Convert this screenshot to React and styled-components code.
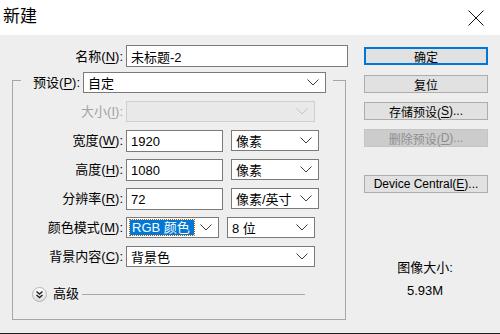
import React from 'react'
import styled, { createGlobalStyle } from 'styled-components'

const GlobalStyle = createGlobalStyle`
  body {
    margin: 0;
    font-family: "Liberation Sans", "Noto Sans CJK SC", sans-serif;
    font-size: 13px;
    color: #000;
  }
  * { box-sizing: border-box; }
`

const Window = styled.div`
  width: 500px;
  height: 334px;
  display: flex;
  flex-direction: column;
  background: #fff;
`

const TitleBar = styled.div`
  height: 35px;
  display: flex;
  align-items: center;
  justify-content: space-between;
  padding: 0 16px 0 3px;
  background: #fff;
`

const Title = styled.div`
  font-size: 17px;
  line-height: 20px;
  margin-top: -1px;
`

const Body = styled.div`
  flex: 1;
  display: flex;
  background: #eeeeee;
  border-bottom: 1px solid #1e1e1e;
`

const LeftCol = styled.div`
  width: 348px;
  padding: 10px 0 0 12px;
`

const NameRow = styled.div`
  display: flex;
  align-items: center;
  gap: 3px;
  height: 22px;
`

const Label = styled.div`
  width: ${p => p.$w || 110}px;
  text-align: right;
  white-space: nowrap;
  line-height: 21px;
  color: ${p => (p.$disabled ? '#a3a3a3' : '#000')};
`

const Key = styled.span`
  text-decoration: underline;
  text-underline-offset: 2px;
`

const Field = styled.div`
  width: ${p => p.$w}px;
  height: ${p => p.$h || 21}px;
  display: flex;
  align-items: center;
  justify-content: space-between;
  padding: 0 6px 0 4px;
  background: ${p => (p.$disabled ? '#e9e9e9' : '#fff')};
  border: 1px solid ${p => (p.$disabled ? '#cfcfcf' : '#7a7a7a')};
  white-space: nowrap;
`

const Group = styled.div`
  margin-top: 13px;
  width: 334px;
  height: 240px;
  border: 1px solid #a6a6a6;
`

const Legend = styled.div`
  display: flex;
  align-items: center;
  gap: 3px;
  width: fit-content;
  margin: -9px 0 0 8px;
  padding: 0 7px 0 10px;
  background: #eeeeee;
`

const Rows = styled.div`
  display: grid;
  grid-template-columns: 110px auto;
  grid-auto-rows: 21px;
  row-gap: 8px;
  column-gap: 3px;
  margin-top: 8px;
  justify-items: start;
`

const Pair = styled.div`
  display: flex;
  gap: 8px;
`

const Highlight = styled.span`
  background: #0078d7;
  color: #fff;
  padding: 0 4px 0 2px;
  line-height: 16px;
  outline: 1px dotted #b35c00;
  margin-left: -1px;
`

const Advanced = styled.div`
  display: flex;
  align-items: center;
  height: 18px;
  margin: 18px 40px 0 19px;
`

const AdvText = styled.span`
  margin: 0 3px 0 6px;
  line-height: 18px;
`

const Rule = styled.div`
  flex: 1;
  height: 1px;
  background: #a9a9a9;
`

const RightCol = styled.div`
  width: 124px;
  margin-left: 16px;
  padding-top: 12px;
  display: flex;
  flex-direction: column;
  align-items: stretch;
`

const Button = styled.div`
  height: 18px;
  margin-top: ${p => p.$top || 0}px;
  display: flex;
  align-items: center;
  justify-content: center;
  font-size: 12px;
  background: ${p => (p.$disabled ? '#cccccc' : '#e1e1e1')};
  color: ${p => (p.$disabled ? '#8f8f8f' : '#000')};
  border: 1px solid ${p => (p.$disabled ? '#c4c4c4' : '#adadad')};
  box-shadow: ${p => (p.$primary ? 'inset 0 0 0 1px #0078d7' : 'none')};
  ${p => p.$primary && 'border-color: #0078d7;'}
  white-space: nowrap;
`

const SizeInfo = styled.div`
  margin-top: 66px;
  display: flex;
  flex-direction: column;
  align-items: center;
  gap: 5px;
  line-height: 18px;
  padding-right: 2px;
`

function Chevron({ disabled }) {
  return (
    <svg width="12" height="7" viewBox="0 0 12 7">
      <polyline
        points="0.5,0.5 6,6 11.5,0.5"
        fill="none"
        stroke={disabled ? '#c2c2c2' : '#3c3c3c'}
        strokeWidth="1"
      />
    </svg>
  )
}

function Select({ w, value, disabled, children }) {
  return (
    <Field $w={w} $disabled={disabled}>
      <span>{children || value}</span>
      <Chevron disabled={disabled} />
    </Field>
  )
}

function CloseIcon() {
  return (
    <svg width="16" height="16" viewBox="0 0 16 16">
      <path d="M0.5 0.5 L15.5 15.5 M15.5 0.5 L0.5 15.5" stroke="#111" strokeWidth="1" />
    </svg>
  )
}

function ExpandIcon() {
  return (
    <svg width="15" height="15" viewBox="0 0 15 15">
      <defs>
        <linearGradient id="adv" x1="0" y1="0" x2="0" y2="1">
          <stop offset="0" stopColor="#ffffff" />
          <stop offset="1" stopColor="#dcdcdc" />
        </linearGradient>
      </defs>
      <circle cx="7.5" cy="7.5" r="7" fill="url(#adv)" stroke="#b4b4b4" />
      <polyline points="4.5,4.5 7.5,7 10.5,4.5" fill="none" stroke="#222" strokeWidth="1.4" />
      <polyline points="4.5,8 7.5,10.5 10.5,8" fill="none" stroke="#222" strokeWidth="1.4" />
    </svg>
  )
}

export default function App() {
  return (
    <Window>
      <GlobalStyle />
      <TitleBar>
        <Title>新建</Title>
        <CloseIcon />
      </TitleBar>
      <Body>
        <LeftCol>
          <NameRow>
            <Label $w={111}>
              名称(<Key>N</Key>):
            </Label>
            <Field $w={222} $h={22}>未标题-2</Field>
          </NameRow>
          <Group>
            <Legend>
              <Label $w={49}>
                预设(<Key>P</Key>):
              </Label>
              <Select w={243} value="自定" />
            </Legend>
            <Rows>
              <Label $disabled>
                大小(<Key>I</Key>):
              </Label>
              <Select w={189} value="" disabled />

              <Label>
                宽度(<Key>W</Key>):
              </Label>
              <Pair>
                <Field $w={97} $h={22}>1920</Field>
                <Select w={88} value="像素" />
              </Pair>

              <Label>
                高度(<Key>H</Key>):
              </Label>
              <Pair>
                <Field $w={97} $h={22}>1080</Field>
                <Select w={88} value="像素" />
              </Pair>

              <Label>
                分辨率(<Key>R</Key>):
              </Label>
              <Pair>
                <Field $w={97} $h={22}>72</Field>
                <Select w={88} value="像素/英寸" />
              </Pair>

              <Label>
                颜色模式(<Key>M</Key>):
              </Label>
              <Pair>
                <Select w={93}>
                  <Highlight>RGB 颜色</Highlight>
                </Select>
                <Select w={88} value="8 位" />
              </Pair>

              <Label>
                背景内容(<Key>C</Key>):
              </Label>
              <Select w={189} value="背景色" />
            </Rows>
            <Advanced>
              <ExpandIcon />
              <AdvText>高级</AdvText>
              <Rule />
            </Advanced>
          </Group>
        </LeftCol>
        <RightCol>
          <Button $primary>确定</Button>
          <Button $top={10}>复位</Button>
          <Button $top={9}>
            存储预设(<Key>S</Key>)...
          </Button>
          <Button $top={9} $disabled>
            删除预设(<Key>D</Key>)...
          </Button>
          <Button $top={28}>
            Device Central(<Key>E</Key>)...
          </Button>
          <SizeInfo>
            <span>图像大小:</span>
            <span>5.93M</span>
          </SizeInfo>
        </RightCol>
      </Body>
    </Window>
  )
}
